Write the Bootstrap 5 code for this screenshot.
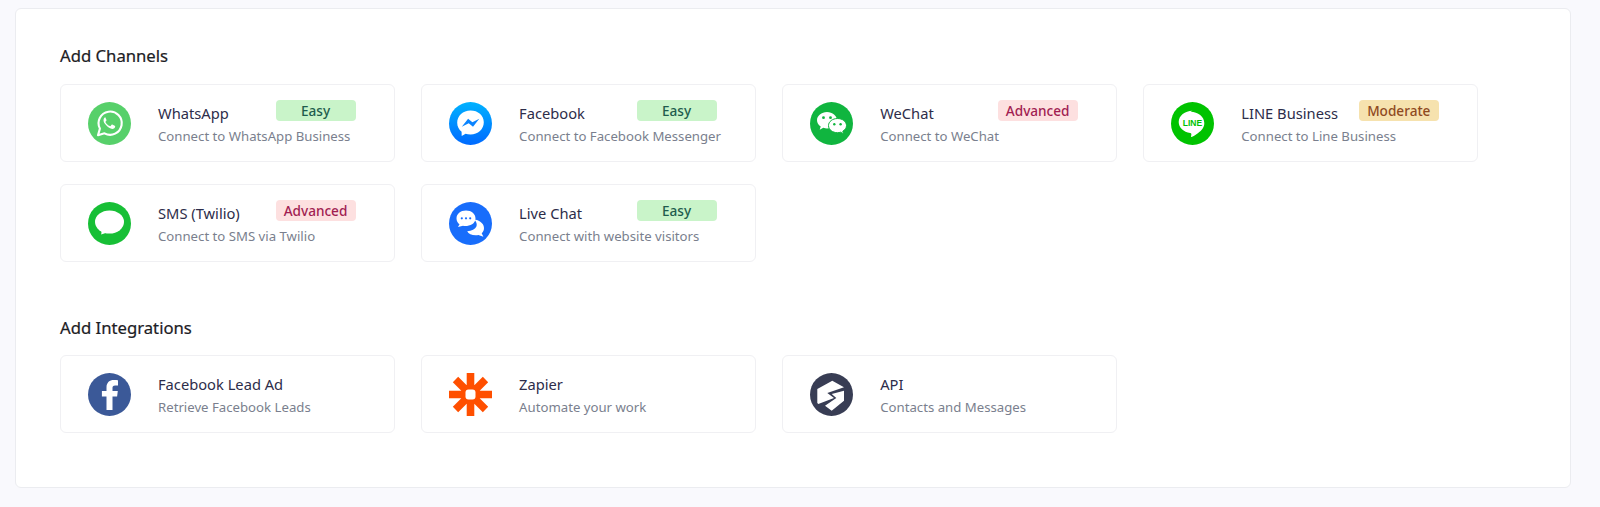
<!DOCTYPE html>
<html lang="en">
<head>
  <meta charset="UTF-8" />
  <meta name="viewport" content="width=device-width, initial-scale=1.0"/>
  <title>Add Channels</title>
  <link href="https://cdn.jsdelivr.net/npm/bootstrap@5.3.0/dist/css/bootstrap.min.css" rel="stylesheet">
  <style>
    body {
      background-color: #f9f9fd;
      font-family: "Noto Sans", sans-serif;
      padding: 8px 29px 19px 15px;
      overflow: hidden;
    }
    .panel {
      background: #fff;
      border: 1px solid #ebecf0;
      border-radius: 6px;
      padding: 37px 43.5px 44px;
      height: 480px;
    }
    .section-title {
      font-size: 16.7px;
      font-weight: 400;
      line-height: 20px;
      color: #1c2024;
      margin: 0 0 18px;
      padding-left: 0.5px;
      -webkit-text-stroke: 0.2px #1c2024;
    }
    .section-gap { margin: 56px 0 17px; }
    .tile-grid {
      display: grid;
      grid-template-columns: repeat(4, 335px);
      column-gap: 26.1px;
      row-gap: 22px;
    }
    .tile {
      position: relative;
      height: 78px;
      padding-left: 27px;
      background: #fff;
      border: 1px solid #f0f0f3;
      border-radius: 6px;
      gap: 27.5px;
    }
    .tile-icon { width: 43px; height: 43px; flex: none; display: block; }
    .tile-text { padding-top: 2px; }
    .tile-name {
      font-size: 14.7px;
      font-weight: 400;
      line-height: 20px;
      color: #2d2d4a;
    }
    .tile-desc {
      font-size: 13.2px;
      line-height: 18px;
      margin-top: 4px;
      color: #7a7f8e;
    }
    .level {
      position: absolute;
      top: 15px;
      right: 38px;
      width: 80px;
      height: 21px;
      border-radius: 4px;
      font-size: 13.6px;
      font-weight: 500;
      line-height: 21px;
      text-align: center;
    }
    .level-easy { background: #c9f4c9; color: #1f5c4d; }
    .level-advanced { background: #fde0e0; color: #a11d52; }
    .level-moderate { background: #f6e2ae; color: #8f4a1f; }
  </style>
</head>
<body>
  <div class="panel">
    <h2 class="section-title">Add Channels</h2>
    <div class="tile-grid">
      <div class="tile d-flex align-items-center">
        <svg class="tile-icon" viewBox="0 0 43 43"><circle cx="21.5" cy="21.5" r="21.5" fill="#57d06a"/><path d="M10 33.2l1.9-6.6a11.6 11.6 0 1 1 4.6 4.7z" fill="none" stroke="#fff" stroke-width="2.1" stroke-linejoin="round"/><path d="M17.6 15.2c-.5 0-1.3.3-1.7 1.2-.8 1.7-.3 3.7 1.2 5.7 1.7 2.3 3.8 4 6.3 4.7 1.6.4 3.1-.3 3.6-1.6.2-.6.2-1 .1-1.2l-2.8-1.4c-.3-.1-.5-.1-.7.2l-1 1.2c-.2.2-.4.3-.7.1-2-.8-3.4-2.1-4.4-3.9-.1-.3 0-.5.2-.7l.7-.9c.2-.2.2-.4.1-.7l-1.2-2.7c-.2-.4-.4-.4-.7-.4z" fill="#fff"/></svg>
        <div class="tile-text"><div class="tile-name">WhatsApp</div><div class="tile-desc">Connect to WhatsApp Business</div></div>
        <span class="level level-easy">Easy</span>
      </div>
      <div class="tile d-flex align-items-center">
        <svg class="tile-icon" viewBox="0 0 43 43"><defs><linearGradient id="msg" x1="0" y1="0" x2="0" y2="1"><stop offset="0" stop-color="#00b2ff"/><stop offset="1" stop-color="#006aff"/></linearGradient></defs><circle cx="21.5" cy="21.5" r="21.5" fill="url(#msg)"/><path d="M21.5 8.5c-7.5 0-13.3 5.4-13.3 12.3 0 3.7 1.7 6.9 4.4 9l.1 4.1 3.9-2.1c1.5.5 3.1.8 4.9.8 7.5 0 13.3-5.4 13.3-12.3s-5.8-11.8-13.3-11.8z" fill="#fff"/><path d="M12.8 24.8l6.3-8 4.3 3.5 6.900-3.500-6.300 8-4.300-3.500z" fill="#0a84ff"/></svg>
        <div class="tile-text"><div class="tile-name">Facebook</div><div class="tile-desc">Connect to Facebook Messenger</div></div>
        <span class="level level-easy">Easy</span>
      </div>
      <div class="tile d-flex align-items-center">
        <svg class="tile-icon" viewBox="0 0 43 43"><circle cx="21.5" cy="21.5" r="21.5" fill="#10b53f"/><path d="M17 10c-5.500 0-10 3.700-10 8.300 0 2.600 1.400 4.800 3.700 6.300l-1 3.100 3.600-1.900c1.200.4 2.400.6 3.700.6 5.500 0 10-3.600 10-8.100s-4.500-8.300-10-8.300z" fill="#fff"/><circle cx="13.5" cy="15.7" r="1.400" fill="#10b53f"/><circle cx="20.5" cy="15.7" r="1.400" fill="#10b53f"/><path d="M27.5 16.500c-5 0-9 3.100-9 7.100s4 7.100 9 7.100c1.100 0 2.100-.2 3.100-.5l3 1.700-.8-2.700c2.300-1.300 3.700-3.300 3.700-5.600 0-4-4-7.100-9-7.100z" fill="#fff" stroke="#10b53f" stroke-width="1"/><circle cx="24.3" cy="22.3" r="1.200" fill="#10b53f"/><circle cx="30.6" cy="22.3" r="1.200" fill="#10b53f"/></svg>
        <div class="tile-text"><div class="tile-name">WeChat</div><div class="tile-desc">Connect to WeChat</div></div>
        <span class="level level-advanced">Advanced</span>
      </div>
      <div class="tile d-flex align-items-center">
        <svg class="tile-icon" viewBox="0 0 43 43"><circle cx="21.5" cy="21.5" r="21.5" fill="#00c300"/><path d="M21.5 8.800c-7.600 0-13.800 5-13.800 11.200 0 5.500 4.900 10.100 11.500 11 .4.100 1 .3 1.100.7.100.3 0 .9 0 1.200l-.2 1.200c-.1.400-.2 1.300 1 .7 1.300-.5 7-4.100 9.600-7.100 1.800-2 2.600-4 2.600-6.700 0-6.200-6.200-11.200-13.800-11.200z" fill="#fff"/><text x="21.5" y="23.800" text-anchor="middle" font-family="Liberation Sans, sans-serif" font-size="8.500" font-weight="700" fill="#00c300">LINE</text></svg>
        <div class="tile-text"><div class="tile-name">LINE Business</div><div class="tile-desc">Connect to Line Business</div></div>
        <span class="level level-moderate">Moderate</span>
      </div>
      <div class="tile d-flex align-items-center">
        <svg class="tile-icon" viewBox="0 0 43 43"><circle cx="21.5" cy="21.5" r="21.5" fill="#17bf36"/><ellipse cx="21.5" cy="20" rx="14.500" ry="11.500" fill="#fff"/><path d="M14 26.500l-.8 6 7.500-2.500z" fill="#fff"/></svg>
        <div class="tile-text"><div class="tile-name">SMS (Twilio)</div><div class="tile-desc">Connect to SMS via Twilio</div></div>
        <span class="level level-advanced">Advanced</span>
      </div>
      <div class="tile d-flex align-items-center">
        <svg class="tile-icon" viewBox="0 0 43 43"><circle cx="21.5" cy="21.5" r="21.5" fill="#186dfb"/><path d="M25 17.500c3.500 0 10 3 10 8.500 0 2.300-.9 4.100-2.300 5.300l1.700 3.400-5-1.700c-5 .8-9.800-.6-11.200-3.800 4.500-.2 8-2 9.300-5 .6-1.400.2-4.700-2.500-6.700z" fill="#fff"/><path d="M17 8.500c-5.500 0-9.500 3.400-9.500 8 0 2.400 1.200 4.400 3 5.800l-1.500 2.700 5-1.200c4.700 1 12.500-1.200 12.500-7.300 0-4.600-4-8-9.500-8z" fill="#fff"/><circle cx="12.8" cy="16.3" r="1.100" fill="#186dfb"/><circle cx="17" cy="16.3" r="1.100" fill="#186dfb"/><circle cx="21.2" cy="16.3" r="1.100" fill="#186dfb"/></svg>
        <div class="tile-text"><div class="tile-name">Live Chat</div><div class="tile-desc">Connect with website visitors</div></div>
        <span class="level level-easy">Easy</span>
      </div>
    </div>

    <h2 class="section-title section-gap">Add Integrations</h2>
    <div class="tile-grid">
      <div class="tile d-flex align-items-center">
        <svg class="tile-icon" viewBox="0 0 43 43"><circle cx="21.5" cy="21.5" r="21.5" fill="#3b5998"/><path d="M24.5 37V23.500h4.600l.7-5.500h-5.300v-3.200c0-1.500.5-2.400 2.600-2.400h2.900V7.300c-.5-.1-2.200-.3-4.200-.3-4.200 0-7.300 2.600-7.300 7.200v3.800h-4.600v5.500h4.600V37z" fill="#fff"/></svg>
        <div class="tile-text"><div class="tile-name">Facebook Lead Ad</div><div class="tile-desc">Retrieve Facebook Leads</div></div>
      </div>
      <div class="tile d-flex align-items-center">
        <svg class="tile-icon" viewBox="0 0 43 43"><g stroke="#ff4f00" stroke-width="7.600"><path d="M21.5 0v43M0 21.500h43M6.500 6.500l30 30M36.500 6.500l-30 30"/></g><rect x="16.500" y="16.500" width="10" height="10" rx="3" fill="#fff"/></svg>
        <div class="tile-text"><div class="tile-name">Zapier</div><div class="tile-desc">Automate your work</div></div>
      </div>
      <div class="tile d-flex align-items-center">
        <svg class="tile-icon" viewBox="0 0 43 43"><circle cx="21.5" cy="21.5" r="21.5" fill="#383d54"/><path d="M7.300 16L22.300 7.700 34 14.300 17.300 20 24 25 8.300 31 7.300 30z" fill="#fff"/><path d="M34 17.700V27.700L21.700 37.700 15 32.700 26.300 25 21.700 21z" fill="#fff"/></svg>
        <div class="tile-text"><div class="tile-name">API</div><div class="tile-desc">Contacts and Messages</div></div>
      </div>
    </div>
  </div>
  <script src="https://cdn.jsdelivr.net/npm/bootstrap@5.3.0/dist/js/bootstrap.bundle.min.js"></script>
</body>
</html>
